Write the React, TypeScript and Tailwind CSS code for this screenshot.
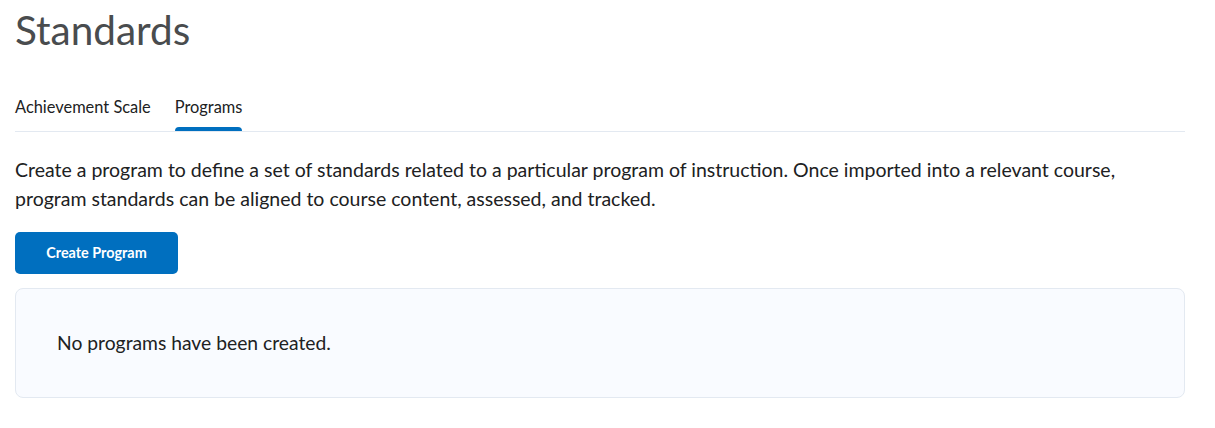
import React, { useState } from 'react'

const tabs = ["Achievement Scale", "Programs"]

const App = () => {
    const [active, setActive] = useState("Programs")

    return (
        <div className="w-[1215px] bg-white pl-[15px] pr-[30px] text-[#494c4e]" style={{ fontFamily: 'Lato, "Noto Sans", sans-serif' }}>
            <h1 className="pt-[6px] text-[40.5px] leading-[48px] font-normal">Standards</h1>

            {/* tabs */}
            <div className="mt-[42px] flex gap-[24px] border-b border-[#e3e9f1]">
                {tabs.map((t) => (
                    <button
                        key={t}
                        onClick={() => setActive(t)}
                        className="relative pb-[14px] pt-[1px] text-[16.4px] leading-[20px] text-[#202122]"
                    >
                        {t}
                        {active === t && (
                            <span className="absolute bottom-0 left-0 right-0 h-[4px] rounded-t-[4px] bg-[#006fbf]" />
                        )}
                    </button>
                ))}
            </div>

            <p className="mt-[23px] text-[19.5px] leading-[29px] text-[#202122]">
                Create a program to define a set of standards related to a particular program of instruction. Once imported into a relevant course, program standards can be aligned to course content, assessed, and tracked.
            </p>

            <button className="mt-[19px] h-[42px] w-[163px] rounded-[5px] bg-[#006fbf] text-[14.4px] font-bold text-white">
                Create Program
            </button>

            {/* empty state */}
            <div className="mt-[14px] flex h-[110px] items-center rounded-[8px] border border-[#e3e9f1] bg-[#f9fbff] px-[41px]">
                <p className="text-[19.3px] leading-[30px] text-[#202122]">No programs have been created.</p>
            </div>
            <div className="h-[30px]" />
        </div>
    )
}

export default App
